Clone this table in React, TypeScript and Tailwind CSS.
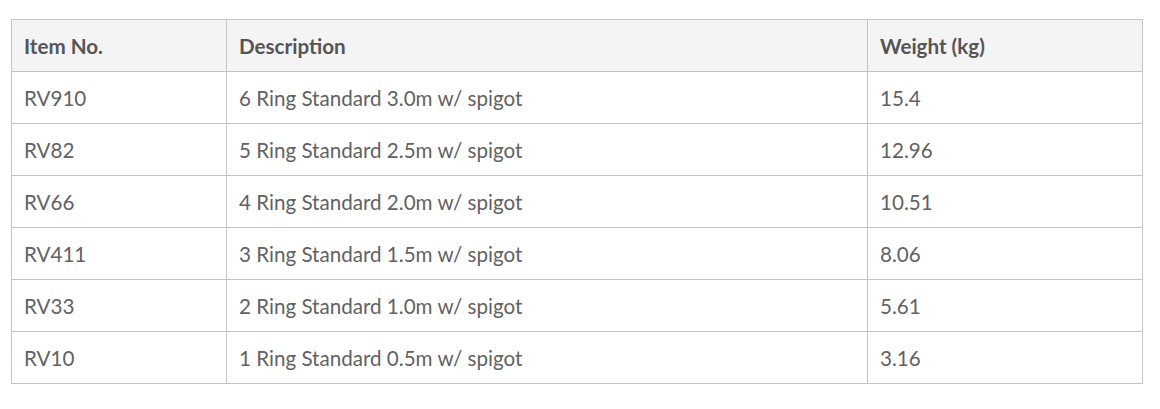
import React from "react";

const rows = [
  ["RV910", "6 Ring Standard 3.0m w/ spigot", "15.4"],
  ["RV82", "5 Ring Standard 2.5m w/ spigot", "12.96"],
  ["RV66", "4 Ring Standard 2.0m w/ spigot", "10.51"],
  ["RV411", "3 Ring Standard 1.5m w/ spigot", "8.06"],
  ["RV33", "2 Ring Standard 1.0m w/ spigot", "5.61"],
  ["RV10", "1 Ring Standard 0.5m w/ spigot", "3.16"],
];

export default function App() {
  return (
    <div className="w-[1160px] h-[409px] bg-white pt-[19px] pl-[11px]" style={{ fontFamily: "Lato, 'Open Sans', sans-serif" }}>
      <div className="grid grid-cols-[215px_641px_275px] w-[1132px] border-l border-t border-[#c4c4c4]">
        {["Item No.", "Description", "Weight (kg)"].map((h) => (
          <div key={h} className="h-[52px] flex items-center px-3 pt-[2px] bg-[#f4f4f4] border-r border-b border-[#c4c4c4] text-[20.6px] font-bold text-[#555555]">
            {h}
          </div>
        ))}
        {rows.map((r) =>
          r.map((c, i) => (
            <div key={r[0] + i} className="h-[52px] flex items-center px-3 pt-[2px] border-r border-b border-[#c4c4c4] text-[20.6px] text-[#626262]">
              {c}
            </div>
          ))
        )}
      </div>
    </div>
  );
}
